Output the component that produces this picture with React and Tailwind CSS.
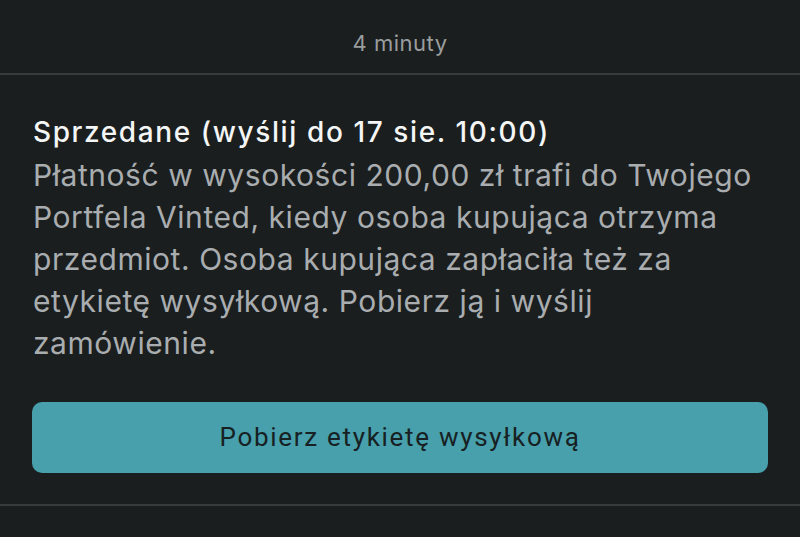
const lines = [
  'Płatność w wysokości 200,00 zł trafi do Twojego',
  'Portfela Vinted, kiedy osoba kupująca otrzyma',
  'przedmiot. Osoba kupująca zapłaciła też za',
  'etykietę wysyłkową. Pobierz ją i wyślij',
  'zamówienie.',
];

export default function App() {
  return (
    <div className="w-[800px] h-[537px] bg-[#1a1e1f] overflow-hidden flex flex-col" style={{ fontFamily: 'Inter, "Noto Sans", sans-serif' }}>
      <div className="h-[75px] flex items-center justify-center pt-[14px] border-b-2 border-[#383b3c]">
        <span className="text-[22px] tracking-[0.5px] text-[#9a9d9e]">4 minuty</span>
      </div>
      <div className="px-[33px] pt-[39px]">
        <h2 className="text-[28px] leading-[36px] tracking-[1.6px] font-medium text-[#f4f5f5] whitespace-nowrap">Sprzedane (wyślij do 17 sie. 10:00)</h2>
        <p className="text-[30px] leading-[42px] tracking-[0.55px] text-[#a9adaf] mt-[4px] whitespace-nowrap">
          {lines.map((l, i) => (
            <span key={i} className="block">{l}</span>
          ))}
        </p>
      </div>
      <div className="px-[32px] mt-[38px]">
        <button className="w-full h-[71px] rounded-[10px] bg-[#47a0ac] text-[#172022] text-[26px] tracking-[1.7px]" style={{ fontFamily: 'Roboto, sans-serif' }}>
          Pobierz etykietę wysyłkową
        </button>
      </div>
      <div className="mt-[31px] border-t-2 border-[#383b3c]" />
    </div>
  );
}
